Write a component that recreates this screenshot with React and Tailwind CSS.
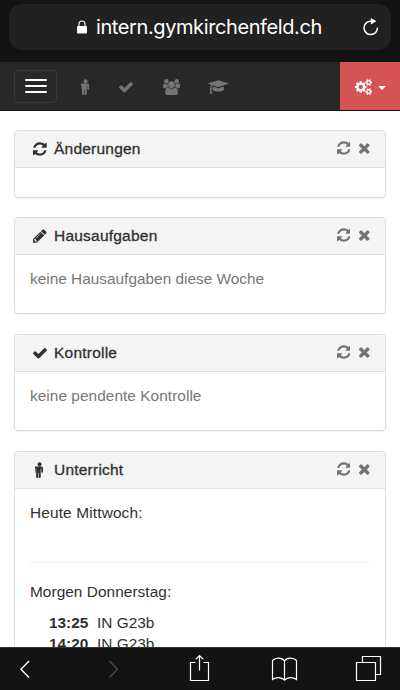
import React from "react";

const icons = {
  refresh: {
    box: "128 0 1536 1792",
    d: "M1639 1056q0 5-1 7-64 268-268 434.5t-478 166.5q-146 0-282.5-55t-243.5-157l-129 129q-19 19-45 19t-45-19-19-45v-448q0-26 19-45t45-19h448q26 0 45 19t19 45-19 45l-137 137q71 66 161 102t187 36q134 0 250-65t186-179q11-17 53-117 8-23 30-23h192q13 0 22.5 9.5t9.5 22.5zm25-800v448q0 26-19 45t-45 19h-448q-26 0-45-19t-19-45 19-45l138-138q-148-137-349-137-134 0-250 65t-186 179q-11 17-53 117-8 23-30 23h-199q-13 0-22.5-9.5t-9.5-22.5v-7q65-268 270-434.5t480-166.5q146 0 284 55.5t245 156.5l130-129q19-19 45-19t45 19 19 45z",
  },
  check: {
    box: "0 0 1792 1792",
    d: "M1671 566q0 40-28 68l-724 724-136 136q-28 28-68 28t-68-28l-136-136-362-362q-28-28-28-68t28-68l136-136q28-28 68-28t68 28l294 295 656-657q28-28 68-28t68 28l136 136q28 28 28 68z",
  },
  times: {
    box: "192 0 1408 1792",
    d: "M1490 1322q0 40-28 68l-136 136q-28 28-68 28t-68-28l-294-294-294 294q-28 28-68 28t-68-28l-136-136q-28-28-28-68t28-68l294-294-294-294q-28-28-28-68t28-68l136-136q28-28 68-28t68 28l294 294 294-294q28-28 68-28t68 28l136 136q28 28 28 68t-28 68l-294 294 294 294q28 28 28 68z",
  },
  pencil: {
    box: "128 0 1536 1792",
    d: "M491 1536l91-91-235-235-91 91v107h128v128h107zm523-928q0-22-22-22-10 0-17 7l-542 542q-7 7-7 17 0 22 22 22 10 0 17-7l542-542q7-7 7-17zm-54-192l416 416-832 832h-416v-416zm683 96q0 53-37 90l-166 166-416-416 166-165q36-38 90-38 53 0 91 38l235 234q37 39 37 91z",
  },
  male: {
    box: "384 0 1024 1792",
    d: "M1280 704v416q0 40-28 68t-68 28-68-28-28-68v-352h-64v912q0 46-33 79t-79 33-79-33-33-79v-464h-64v464q0 46-33 79t-79 33-79-33-33-79v-912h-64v352q0 40-28 68t-68 28-68-28-28-68v-416q0-80 56-136t136-56h640q80 0 136 56t56 136zm-160-448q0 93-65.5 158.5t-158.5 65.5-158.5-65.5-65.5-158.5 65.5-158.5 158.5-65.5 158.5 65.5 65.5 158.5z",
  },
  users: {
    box: "-64 0 1920 1792",
    d: "M529 896q-162 5-265 128h-134q-82 0-138-40.5t-56-118.5q0-353 124-353 6 0 43.5 21t97.5 42.5 119 21.5q67 0 133-23-5 37-5 66 0 159 93 287zm1071 637q0 120-73 189.5t-194 69.5h-874q-121 0-194-69.5t-73-189.5q0-53 3.5-103.5t14-109 26.5-108.5 43-97.5 62-81 85.5-53.5 111.5-20q10 0 43 21.5t73 48 107 48 135 21.5 135-21.5 107-48 73-48 43-21.5q61 0 111.5 20t85.5 53.5 62 81 43 97.5 26.5 108.5 14 109 3.5 103.5zm-1024-1277q0 106-75 181t-181 75-181-75-75-181 75-181 181-75 181 75 75 181zm704 384q0 159-112.5 271.5t-271.5 112.5-271.5-112.5-112.5-271.5 112.5-271.5 271.5-112.5 271.5 112.5 112.5 271.5zm576 225q0 78-56 118.5t-138 40.5h-134q-103-123-265-128 93-128 93-287 0-29-5-66 66 23 133 23 59 0 119-21.5t97.5-42.5 43.5-21q124 0 124 353zm-128-609q0 106-75 181t-181 75-181-75-75-181 75-181 181-75 181 75 75 181z",
  },
  cap: {
    box: "0 0 2304 1792",
    d: "M1774 836l18 316q4 69-82 128t-235 93.5-323 34.5-323-34.5-235-93.5-82-128l18-316 574 181q22 7 48 7t48-7zm530-324q0 23-22 31l-1120 352q-4 1-10 1t-10-1l-652-206q-43 34-71 111.5t-34 178.5q63 36 63 109 0 69-58 107l58 433q2 14-8 25-9 11-24 11h-192q-15 0-24-11-10-11-8-25l58-433q-58-38-58-107 0-73 65-111 11-207 98-330l-333-104q-22-8-22-31t22-31l1120-352q4-1 10-1t10 1l1120 352q22 8 22 31z",
  },
  cogs: {
    box: "-64 0 1920 1792",
    d: "M832 896q0-106-75-181t-181-75-181 75-75 181 75 181 181 75 181-75 75-181zm768 512q0-52-38-90t-90-38-90 38-38 90q0 53 37.5 90.5t90.5 37.5 90.5-37.5 37.5-90.5zm0-1024q0-52-38-90t-90-38-90 38-38 90q0 53 37.5 90.5t90.5 37.5 90.5-37.5 37.5-90.5zm-384 421v185q0 10-7 19.5t-16 10.5l-155 24q-11 35-32 76 34 48 90 115 7 11 7 20 0 12-7 19-23 30-82.5 89.5t-78.5 59.5q-11 0-21-7l-115-90q-37 19-77 31-11 108-23 155-7 24-30 24h-186q-11 0-20-7.5t-10-17.5l-23-153q-34-10-75-31l-118 89q-7 7-20 7-11 0-21-8-144-133-144-160 0-9 7-19 10-14 41-53t47-61q-23-44-35-82l-152-24q-10-1-17-9.5t-7-19.5v-185q0-10 7-19.5t16-10.5l155-24q11-35 32-76-34-48-90-115-7-11-7-20 0-12 7-20 22-30 82-89t79-59q11 0 21 7l115 90q34-18 77-32 11-108 23-154 7-24 30-24h186q11 0 20 7.5t10 17.5l23 153q34 10 75 31l118-89q8-7 20-7 11 0 21 8 144 133 144 160 0 8-7 19-12 16-42 54t-45 60q23 48 34 82l152 23q10 2 17 10.5t7 19.5zm640 533v140q0 16-149 31-12 27-30 52 51 113 51 138 0 4-4 7-122 71-124 71-8 0-46-47t-52-68q-20 2-30 2t-30-2q-14 21-52 68t-46 47q-2 0-124-71-4-3-4-7 0-25 51-138-18-25-30-52-149-15-149-31v-140q0-16 149-31 13-29 30-52-51-113-51-138 0-4 4-7 4-2 35-20t59-34 30-16q8 0 46 46.5t52 67.5q20-2 30-2t30 2q51-71 92-112l6-2q4 0 124 70 4 3 4 7 0 25-51 138 17 23 30 52 149 15 149 31zm0-1024v140q0 16-149 31-12 27-30 52 51 113 51 138 0 4-4 7-122 71-124 71-8 0-46-47t-52-68q-20 2-30 2t-30-2q-14 21-52 68t-46 47q-2 0-124-71-4-3-4-7 0-25 51-138-18-25-30-52-149-15-149-31v-140q0-16 149-31 13-29 30-52-51-113-51-138 0-4 4-7 4-2 35-20t59-34 30-16q8 0 46 46.5t52 67.5q20-2 30-2t30 2q51-71 92-112l6-2q4 0 124 70 4 3 4 7 0 25-51 138 17 23 30 52 149 15 149 31z",
  },
};

function Icon({ name, className = "" }) {
  return (
    <svg viewBox={icons[name].box} fill="currentColor" className={`h-4 w-auto shrink-0 ${className}`}>
      <path d={icons[name].d} />
    </svg>
  );
}

function Panel({ icon, title, className, children }) {
  return (
    <section className={`flex shrink-0 flex-col overflow-hidden rounded-[4px] border border-[#dcdcdc] bg-white shadow-[0_1px_1px_rgba(0,0,0,0.06)] ${className}`}>
      <header className="flex h-[37px] shrink-0 items-center border-b border-[#dfdfdf] bg-[#f4f4f4] pr-[14px] pl-[15px]">
        <span className="flex w-5 justify-center text-[#303030]">
          <Icon name={icon} />
        </span>
        <h2 className="ml-1 flex-1 text-[15.5px] leading-5 tracking-[0.22px] text-[#303030] [-webkit-text-stroke:0.3px_#303030]">{title}</h2>
        <span className="flex items-center gap-2 pb-0.5 text-[#737373]">
          <Icon name="refresh" />
          <Icon name="times" />
        </span>
      </header>
      <div className="px-[15px] pt-[13px] text-[15.4px] leading-[21px]">{children}</div>
    </section>
  );
}

function AddressBar() {
  return (
    <div className="h-[62px] shrink-0 bg-[#131313] px-[9px] pt-1">
      <div className="flex h-[46px] items-center rounded-[13px] bg-[#212121] pr-[11px] pl-[68px] text-white">
        <svg viewBox="0 0 10 14" className="h-[14px] w-[10px]">
          <path d="M2 7V4a3 3 0 0 1 6 0v3" fill="none" stroke="currentColor" strokeWidth="1.1" />
          <rect y="6" width="10" height="7.5" rx="1" fill="currentColor" />
        </svg>
        <span className="ml-[9px] flex-1 font-[Inter,sans-serif] text-[20px] tracking-[-0.4px] whitespace-nowrap">intern.gymkirchenfeld.ch</span>
        <svg viewBox="0 0 18 18" className="h-[18px] w-[18px]" fill="none">
          <path d="M10 3.200H8.200A6.700 6.700 0 1 0 15.400 9.700" stroke="currentColor" strokeWidth="1.500" />
          <path d="M8.800 0 14.400 3.300 8.800 6.600z" fill="currentColor" />
        </svg>
      </div>
    </div>
  );
}

function Navbar() {
  return (
    <nav className="flex h-[49px] shrink-0 items-stretch border-b border-[#151515] bg-[#282828] text-[#747474]">
      <div className="flex flex-1 items-center pl-[14px]">
        <button className="flex h-[33px] w-[43px] flex-col items-center justify-center gap-1 rounded-[4px] border border-[#383838]">
          <span className="h-[2px] w-[22px] rounded-[1px] bg-white" />
          <span className="h-[2px] w-[22px] rounded-[1px] bg-white" />
          <span className="h-[2px] w-[22px] rounded-[1px] bg-white" />
        </button>
        <Icon name="male" className="mt-0.5 ml-6" />
        <Icon name="check" className="mt-0.5 ml-[28px]" />
        <Icon name="users" className="mt-0.5 ml-[28.5px]" />
        <Icon name="cap" className="mt-0.5 ml-[28.5px]" />
      </div>
      <div className="flex w-[60px] items-center bg-[#d65554] pl-[15px] text-white">
        <Icon name="cogs" className="mt-0.5" />
        <span className="mt-1 ml-[6px] border-x-[4px] border-t-[4px] border-x-transparent border-t-white" />
      </div>
    </nav>
  );
}

function Toolbar() {
  return (
    <footer className="flex h-[43px] shrink-0 border-t border-[#303030] bg-[#131313] text-white">
      <svg width="400" height="42" viewBox="0 648 400 42" fill="none" stroke="currentColor" strokeWidth="1.2">
        <path d="M29 661l-8 8.2 8 8.3" strokeWidth="1.4" />
        <path d="M109.500 661l8 8.200-8 8.300" stroke="#4b4b4b" strokeWidth="1.400" />
        <path d="M195.500 662.500H190.500V680.500H208.500V662.500H203.500M199.500 670.500V655.500M195.700 659.300L199.500 655.500L203.300 659.300" />
        <path d="M284.500 661C282 657.200 275.500 657.200 272.500 660.500V679.500C276 677 281.500 677 284.500 680.200C287.500 677 293 677 296.500 679.500V660.500C293.500 657.200 287 657.200 284.500 661V680.200" />
        <path d="M356.500 662.500H375.500V680.500H356.500ZM362.500 662.500V656.500H380.500V674.500H375.500" />
      </svg>
    </footer>
  );
}

export default function App() {
  return (
    <div className="flex h-[690px] w-[400px] flex-col overflow-hidden bg-white font-['Liberation_Sans',Arial,sans-serif] text-[#303030]">
      <AddressBar />
      <Navbar />
      <main className="flex min-h-0 flex-1 flex-col overflow-hidden px-[14px] pt-[19px]">
        <Panel icon="refresh" title="Änderungen" className="h-[68px]" />
        <Panel icon="pencil" title="Hausaufgaben" className="mt-[19px] h-[97px]">
          <p className="text-[#777]">keine Hausaufgaben diese Woche</p>
        </Panel>
        <Panel icon="check" title="Kontrolle" className="mt-5 h-[97px]">
          <p className="tracking-[0.05px] text-[#777]">keine pendente Kontrolle</p>
        </Panel>
        <Panel icon="male" title="Unterricht" className="mt-5 h-[240px]">
          <p className="tracking-[0.15px]">Heute Mittwoch:</p>
          <hr className="mt-[39px] border-[#eee]" />
          <p className="mt-[18px] tracking-[0.05px]">Morgen Donnerstag:</p>
          <div className="mt-[10px] grid grid-cols-[48px_1fr] pl-[19px]">
            <b>13:25</b>
            <span>IN G23b</span>
            <b>14:20</b>
            <span>IN G23b</span>
          </div>
        </Panel>
      </main>
      <Toolbar />
    </div>
  );
}
